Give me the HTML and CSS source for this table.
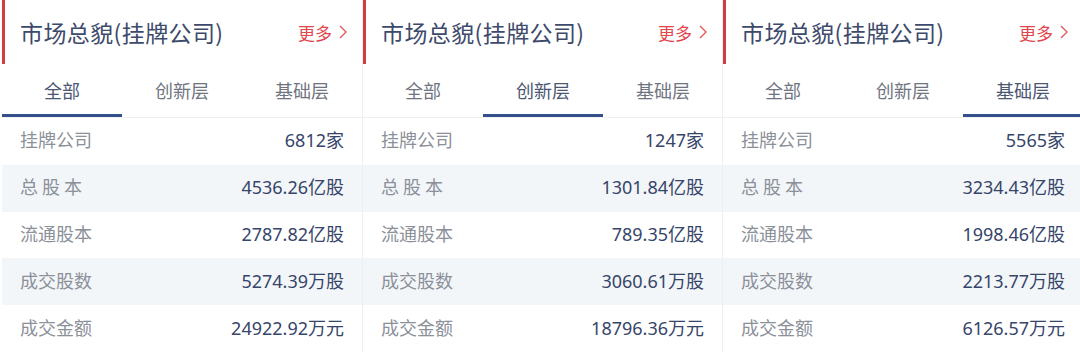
FILE: index.html
```html
<!DOCTYPE html>
<html lang="zh-CN">
<head>
    <meta charset="UTF-8">
    <title>市场总貌(挂牌公司)</title>
    <link rel="stylesheet" href="styles.css">
</head>
<body>
    <div class="board">
        <div class="panel">
            <div class="panel-head">
                <h2>市场总貌(挂牌公司)</h2>
                <a class="more" href="#">更多
                    <svg width="10" height="16" viewBox="0 0 10 16"><path d="M2 2 L8 8 L2 14" fill="none" stroke="#e0585c" stroke-width="1.4"/></svg>
                </a>
            </div>
            <div class="tabs">
                <span class="tab active">全部</span>
                <span class="tab">创新层</span>
                <span class="tab">基础层</span>
            </div>
            <div class="row"><span class="label">挂牌公司</span><span class="value">6812家</span></div>
            <div class="row"><span class="label">总 股 本</span><span class="value">4536.26亿股</span></div>
            <div class="row"><span class="label">流通股本</span><span class="value">2787.82亿股</span></div>
            <div class="row"><span class="label">成交股数</span><span class="value">5274.39万股</span></div>
            <div class="row"><span class="label">成交金额</span><span class="value">24922.92万元</span></div>
        </div>

        <div class="panel">
            <div class="panel-head">
                <h2>市场总貌(挂牌公司)</h2>
                <a class="more" href="#">更多
                    <svg width="10" height="16" viewBox="0 0 10 16"><path d="M2 2 L8 8 L2 14" fill="none" stroke="#e0585c" stroke-width="1.4"/></svg>
                </a>
            </div>
            <div class="tabs">
                <span class="tab">全部</span>
                <span class="tab active">创新层</span>
                <span class="tab">基础层</span>
            </div>
            <div class="row"><span class="label">挂牌公司</span><span class="value">1247家</span></div>
            <div class="row"><span class="label">总 股 本</span><span class="value">1301.84亿股</span></div>
            <div class="row"><span class="label">流通股本</span><span class="value">789.35亿股</span></div>
            <div class="row"><span class="label">成交股数</span><span class="value">3060.61万股</span></div>
            <div class="row"><span class="label">成交金额</span><span class="value">18796.36万元</span></div>
        </div>

        <div class="panel">
            <div class="panel-head">
                <h2>市场总貌(挂牌公司)</h2>
                <a class="more" href="#">更多
                    <svg width="10" height="16" viewBox="0 0 10 16"><path d="M2 2 L8 8 L2 14" fill="none" stroke="#e0585c" stroke-width="1.4"/></svg>
                </a>
            </div>
            <div class="tabs">
                <span class="tab">全部</span>
                <span class="tab">创新层</span>
                <span class="tab active">基础层</span>
            </div>
            <div class="row"><span class="label">挂牌公司</span><span class="value">5565家</span></div>
            <div class="row"><span class="label">总 股 本</span><span class="value">3234.43亿股</span></div>
            <div class="row"><span class="label">流通股本</span><span class="value">1998.46亿股</span></div>
            <div class="row"><span class="label">成交股数</span><span class="value">2213.77万股</span></div>
            <div class="row"><span class="label">成交金额</span><span class="value">6126.57万元</span></div>
        </div>
    </div>
</body>
</html>
```

FILE: styles.css
```css
body {
    margin: 0;
    background: #fff;
    font-family: "Noto Sans CJK SC", "Noto Sans", sans-serif;
}

.board {
    display: grid;
    grid-template-columns: 361px 360px 1fr;
    padding-left: 2px;
}

.panel {
    border-right: 1px solid #eceff3;
    background: #fff;
}

.panel:last-child {
    border-right: none;
}

.panel-head {
    height: 64px;
    display: flex;
    align-items: center;
    justify-content: space-between;
    border-left: 3px solid #d43c43;
    padding: 0 14px 0 15px;
}

.panel-head h2 {
    margin: 0;
    font-size: 23px;
    font-weight: 400;
    color: #3d4a6b;
    letter-spacing: 0.4px;
}

.more {
    display: flex;
    align-items: center;
    gap: 6px;
    color: #e0464b;
    font-size: 17px;
    text-decoration: none;
}

.tabs {
    display: grid;
    grid-template-columns: 120px 120px 120px;
    height: 53px;
    border-bottom: 1px solid #eef0f4;
}

.tab {
    display: flex;
    align-items: center;
    justify-content: center;
    font-size: 18px;
    color: #6f7480;
    border-bottom: 3px solid transparent;
    padding-top: 2px;
}

.tab.active {
    color: #4a5672;
    border-bottom-color: #34508a;
}

.row {
    box-sizing: border-box;
    height: 46.8px;
    display: flex;
    align-items: center;
    justify-content: space-between;
    padding: 0 18px 4px 18px;
    font-size: 18px;
}

.row:nth-of-type(2n+4) {
    background: #f3f6f9;
}

.label {
    color: #8b9099;
}

.value {
    color: #36456a;
    font-family: "Noto Sans", "Noto Sans CJK SC", sans-serif;
}
```
